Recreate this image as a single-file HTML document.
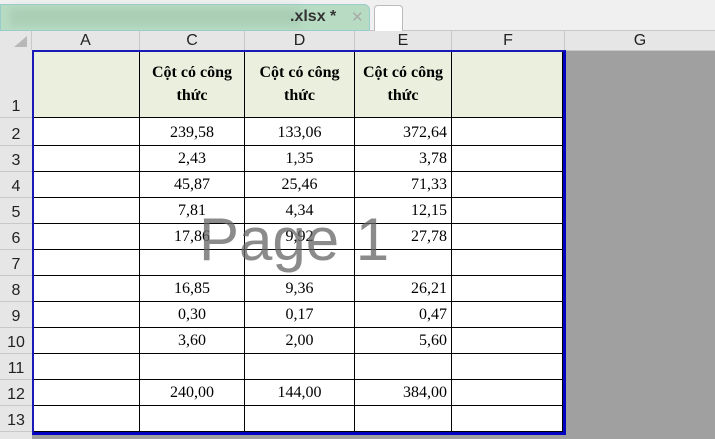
<!DOCTYPE html><html><head><style>
*{margin:0;padding:0;box-sizing:border-box}
body{width:715px;height:439px;overflow:hidden;background:#e6e6e6;font-family:"Liberation Sans",sans-serif;position:relative}
.a{position:absolute}
.ch{position:absolute;top:31px;height:19px;font-size:16px;color:#222;text-align:center;line-height:20px;border-right:1px solid #c8c8c8;background:#e6e6e6}
.rh{position:absolute;left:0;width:32px;font-size:16px;color:#222;text-align:center;border-bottom:1px solid #c8c8c8;background:#e6e6e6;display:flex;align-items:flex-end;justify-content:center;padding-bottom:1px}
.c{position:absolute;font-family:"Liberation Serif",serif;font-size:16px;color:#000;border-right:1px solid #000;border-bottom:1px solid #000;display:flex;align-items:flex-end;padding-bottom:3px}
</style></head><body>
<div class="a" style="left:0;top:0;width:715px;height:31px;background:#f0f0f0;border-bottom:1px solid #c8c8c8"></div>
<div class="a" style="left:0;top:4px;width:370px;height:27px;background:#b7dcc3;border-radius:0 6px 0 0;border:1px solid #9cc;"></div>
<div class="a" style="left:10px;top:8px;width:290px;height:18px;background:#a9ceb5;filter:blur(4px)"></div>
<div class="a" style="left:290px;top:8px;font-size:16px;font-weight:bold;color:#333">.xlsx *</div>
<div class="a" style="left:351px;top:8px;font-size:15px;color:#aaa">✕</div>
<div class="a" style="left:374px;top:5px;width:29px;height:26px;background:#fff;border:1px solid #bbb;border-bottom:none;border-radius:4px 4px 0 0"></div>
<div class="a" style="left:0;top:31px;width:32px;height:19px;background:#e6e6e6;border-right:1px solid #c8c8c8"></div>
<div class="a" style="left:14px;top:36px;width:0;height:0;border-left:13px solid transparent;border-bottom:11px solid #b8b8b8"></div>
<div class="ch" style="left:32px;width:108px">A</div>
<div class="ch" style="left:140px;width:105px">C</div>
<div class="ch" style="left:245px;width:110px">D</div>
<div class="ch" style="left:355px;width:97px">E</div>
<div class="ch" style="left:452px;width:113px">F</div>
<div class="ch" style="left:565px;width:150px;border-right:none">G</div>
<div class="a" style="left:0;top:50px;width:715px;height:1px;background:#c8c8c8"></div>
<div class="a" style="left:565px;top:51px;width:150px;height:388px;background:#a0a0a0"></div>
<div class="a" style="left:32px;top:434px;width:533px;height:5px;background:#a0a0a0"></div>
<div id="g"></div>
<div class="a" style="left:32px;top:50px;width:534px;height:385px;border-left:2px solid #1a1ab8;border-top:2px solid #1a1ab8;border-right:3px solid #0000c0;border-bottom:3px solid #0000c0"></div>
<div class="a" style="left:199px;top:205px;font-size:60px;color:rgba(100,100,100,0.75)">Page 1</div>
<script>
var rows=[50,118,146,172,198,224,250,276,302,328,354,380,406,432];
var cols=[33,140,245,355,452,563];
var data=[null,["239,58","133,06","372,64"],["2,43","1,35","3,78"],["45,87","25,46","71,33"],["7,81","4,34","12,15"],["17,86","9,92","27,78"],["","",""],["16,85","9,36","26,21"],["0,30","0,17","0,47"],["3,60","2,00","5,60"],["","",""],["240,00","144,00","384,00"],["","",""]];
var h="";
for(var r=0;r<13;r++){var t=rows[r],hh=rows[r+1]-t;
h+='<div class="rh" style="top:'+t+'px;height:'+hh+'px">'+(r+1)+'</div>';
for(var c=0;c<5;c++){var l=cols[c],w=cols[c+1]-l;var bg=r==0?'#ebf0de':'#fff';var txt='';var jc='center',pr='';
if(r==0&&c>=1&&c<=3){txt='<b style="text-align:center;line-height:23px;width:100%">Cột có công<br>thức</b>';}
else if(r>0&&c>=1&&c<=3){txt=data[r][c-1];if(c==3){jc='flex-end';pr='padding-right:4px;';}}
h+='<div class="c" style="left:'+l+'px;top:'+t+'px;width:'+w+'px;height:'+hh+'px;background:'+bg+';justify-content:'+jc+';'+pr+(r==0?'align-items:center;padding-bottom:0;':'')+'">'+txt+'</div>';}}
document.getElementById('g').innerHTML=h;
</script>
</body></html>
